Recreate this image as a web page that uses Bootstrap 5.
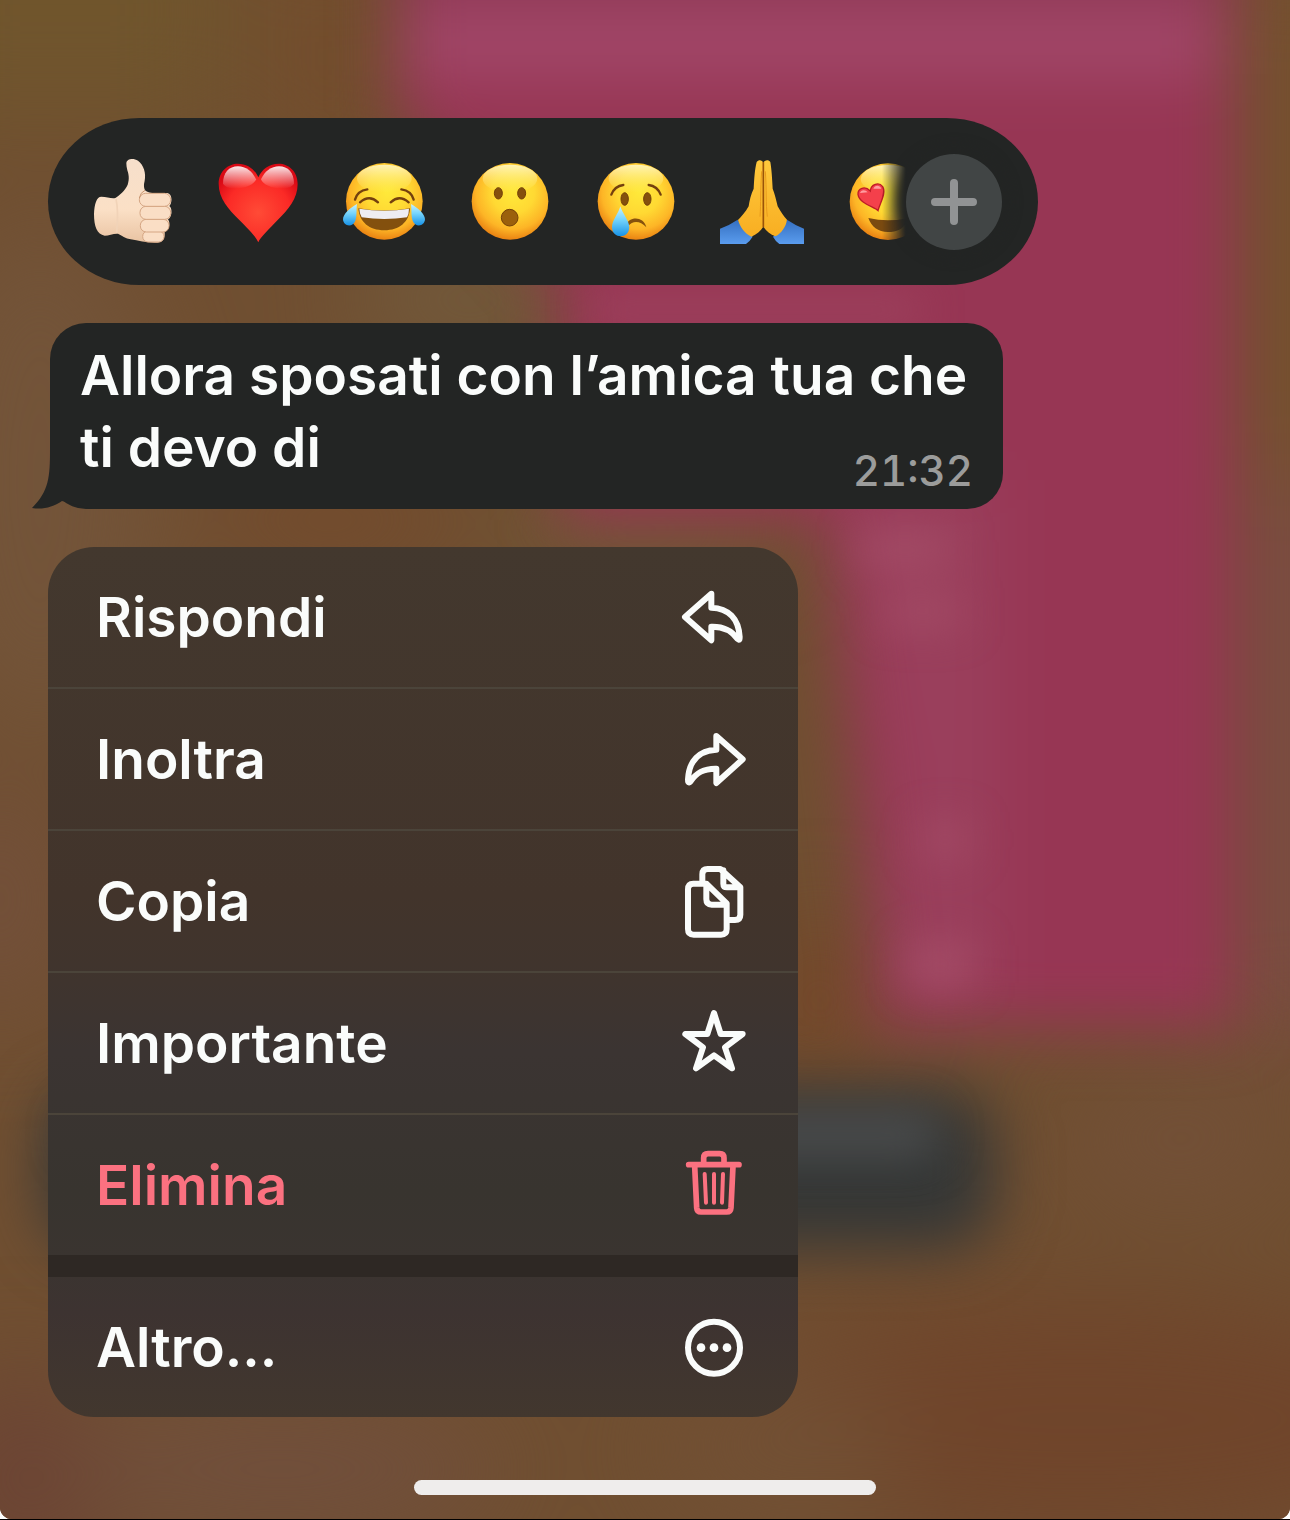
<!DOCTYPE html>
<html lang="it">
<head>
    <meta charset="UTF-8">
    <meta name="viewport" content="width=device-width, initial-scale=1.0">
    <title>Messaggio</title>
    <!-- Bootstrap CSS -->
    <link href="https://cdn.jsdelivr.net/npm/bootstrap@5.3.0/dist/css/bootstrap.min.css" rel="stylesheet">
    <!-- Custom CSS -->
    <style>
        body {
            font-family: Inter, "Liberation Sans", sans-serif;
            font-size: 55px;
            font-weight: 600;
            line-height: 72px;
            color: #fafcfb;
            background: #fff;
            border-bottom: 1px solid #000;
        }
        .screen {
            padding: 118px 48px 24px;
            border-radius: 0 0 12px 12px;
            background: #705035;
        }
        .wallpaper { z-index: 0; }
        .wallpaper filter { color-interpolation-filters: sRGB; }
        .overlay {
            z-index: 1;
            gap: 38px;
            max-width: 990px;
        }

        /* Reactions */
        .reaction-bar {
            height: 167px;
            padding-right: 36px;
            border-radius: 92px / 84px;
            background: #232524;
        }
        .reaction-list {
            gap: 42px;
            padding: 4px 0 4px 42px;
            -webkit-mask-image: linear-gradient(to right, #000 calc(100% - 24px), transparent);
            mask-image: linear-gradient(to right, #000 calc(100% - 24px), transparent);
        }
        .reaction-list svg, .menu-icon { display: block; overflow: visible; }
        .more-btn {
            width: 96px;
            height: 96px;
            background: #414545;
            box-shadow: 0 0 12px 8px #232524;
            z-index: 1;
        }

        /* Message bubble */
        .bubble {
            max-width: 953px;
            margin-left: 2px;
            padding: 16px 30px 14px;
            border-radius: 36px;
            background: #232524;
        }
        .bubble-tail {
            left: -18px;
            bottom: 0;
        }
        .bubble-time {
            margin-top: 36px;
            font-size: 42px;
            font-weight: 500;
            font-variant-numeric: tabular-nums;
            line-height: 48px;
            color: #9b9c9b;
        }

        /* Context menu */
        .context-menu {
            --bs-list-group-bg: transparent;
            --bs-list-group-color: #fafcfb;
            --bs-list-group-action-color: #fafcfb;
            --bs-list-group-border-color: #4b443a;
            max-width: 750px;
            border-radius: 46px;
            background: linear-gradient(#43382e 0, #42342b 40%, #40342d 48%, #3b3432 58%, #38342f 74%, #3a3430 82%, #3d3331 88%, #42372e 100%);
        }
        .context-menu .list-group-item {
            height: 142px;
            padding: 0 48px;
            border-width: 0 0 2px;
            font-weight: 600;
        }
        .context-menu .list-group-item.no-line {
            height: 140px;
            border-bottom-width: 0;
        }
        .context-menu .delete-item { color: #fb7180; }
        .menu-gap {
            height: 22px;
            background: #2e2824;
        }
        .menu-icon {
            fill: none;
            stroke: currentColor;
            stroke-width: 18;
            stroke-linecap: round;
            stroke-linejoin: round;
        }

        .home-bar {
            z-index: 1;
            width: 462px;
            max-width: 60%;
            height: 15px;
            background: #efedec;
        }
    </style>
</head>
<body class="min-vh-100 d-flex flex-column">
    <main class="screen position-relative overflow-hidden flex-grow-1 d-flex flex-column">
        <!-- Blurred chat behind the overlay -->
        <svg class="wallpaper position-absolute top-0 start-0 w-100 h-100" viewBox="0 0 1290 1520" preserveAspectRatio="none" aria-hidden="true">
            <defs>
                <filter id="soft" x="-50%" y="-50%" width="200%" height="200%"><feGaussianBlur stdDeviation="30"/></filter>
                <filter id="spot" x="-50%" y="-50%" width="200%" height="200%"><feGaussianBlur stdDeviation="20"/></filter>
                <filter id="wide" x="-100%" y="-100%" width="300%" height="300%"><feGaussianBlur stdDeviation="50"/></filter>
            </defs>
            <rect width="1290" height="1520" fill="#704f31"/>
            <g filter="url(#wide)">
                <rect x="-100" y="-100" width="330" height="220" fill="#70552d"/>
                <rect x="280" y="-60" width="100" height="240" fill="#744d2c"/>
                <ellipse cx="40" cy="480" rx="120" ry="260" fill="#735439"/>
                <ellipse cx="470" cy="300" rx="120" ry="60" fill="#725a3c"/>
                <ellipse cx="330" cy="520" rx="130" ry="40" fill="#744a2c"/>
                <ellipse cx="640" cy="530" rx="140" ry="40" fill="#705a38"/>
                <rect x="1225" y="-50" width="160" height="650" fill="#75512f"/>
                <rect x="1225" y="480" width="160" height="560" fill="#7b4d42"/>
                <ellipse cx="820" cy="1000" rx="60" ry="70" fill="#764628"/>
                <ellipse cx="1080" cy="1420" rx="380" ry="120" fill="#70452b"/>
                <ellipse cx="1180" cy="1140" rx="110" ry="60" fill="#735038"/>
                <ellipse cx="20" cy="1480" rx="90" ry="110" fill="#6c4434"/>
                <ellipse cx="280" cy="1470" rx="220" ry="60" fill="#714f3d"/>
                <ellipse cx="780" cy="1450" rx="120" ry="80" fill="#725034"/>
                <ellipse cx="0" cy="900" rx="70" ry="120" fill="#73503a"/>
            </g>
            <g filter="url(#soft)">
                <path d="M395-90H1235V1030H875V960L825 520H560V280L395 110Z" fill="#973654"/>
                <path d="M410 10H1215V75H410Z" fill="#a2486a"/>
                <path d="M395-90H1228V-5H395Z" fill="#8c3a55"/>
                <path d="M835 480H1000V1000H890V760Z" fill="#9a3f5c"/>
                <rect x="45" y="1090" width="950" height="160" rx="50" fill="#353736"/>
            </g>
            <g filter="url(#spot)">
                <rect x="590" y="300" width="330" height="20" fill="#a04862"/>
                <rect x="860" y="535" width="90" height="30" fill="#a54e68"/>
                <rect x="885" y="600" width="75" height="25" fill="#a54e68"/>
                <rect x="925" y="825" width="40" height="30" fill="#a54e68"/>
                <rect x="910" y="945" width="60" height="40" fill="#a54e68"/>
                <rect x="70" y="1110" width="870" height="50" rx="25" fill="#484a4b"/>
            </g>
        </svg>

        <div class="overlay position-relative d-flex flex-column w-100">
            <!-- Reactions -->
            <div class="reaction-bar d-flex align-items-center">
                <div class="reaction-list d-flex flex-grow-1 overflow-hidden">
                    <button type="button" class="btn p-0 border-0 flex-shrink-0" aria-label="Mi piace">
                        <svg width="84" height="84" viewBox="150 150 252 252">
                            <defs>
                                <linearGradient id="skin" x1="0" y1="0" x2="0" y2="1"><stop offset="0" stop-color="#f6dfcb"/><stop offset=".6" stop-color="#fbe0c6"/><stop offset="1" stop-color="#e9c3a2"/></linearGradient>
                            </defs>
                            <path d="M259 160C260 146 280 144 294 152C311 164 319 190 314 212C310 226 312 234 315 241C322 249 340 250 355 249L382 249C398 252 397 280 388 288C399 297 395 323 384 328C392 338 389 358 374 365C376 383 370 395 353 398C326 400 296 392 272 388C257 385 245 377 234 371C220 370 207 377 194 377C171 374 162 349 162 313C163 282 170 260 184 260C200 260 215 267 226 264C238 255 255 243 263 224C269 207 266 192 262 181C260 173 259 166 259 160Z" fill="url(#skin)"/>
                            <g fill="#fadec5" stroke="#d5a684" stroke-width="3">
                                <rect x="308" y="363" width="64" height="33" rx="16"/>
                                <rect x="301" y="328" width="86" height="38" rx="18"/>
                                <rect x="300" y="289" width="92" height="39" rx="18"/>
                                <rect x="298" y="250" width="94" height="39" rx="19"/>
                            </g>
                            <path d="M228 267Q236 300 230 369" fill="none" stroke="#f1d3b8" stroke-width="5"/>
                            <path d="M315 241Q301 247 298 264" fill="none" stroke="#c99772" stroke-width="3"/>
                        </svg>
                    </button>
                    <button type="button" class="btn p-0 border-0 flex-shrink-0" aria-label="Cuore">
                        <svg width="84" height="84" viewBox="528 150 252 252">
                            <defs>
                                <radialGradient id="heartRed" cx=".5" cy=".62" r=".62"><stop offset="0" stop-color="#ff4b36"/><stop offset=".65" stop-color="#fb2a26"/><stop offset="1" stop-color="#d90915"/></radialGradient>
                                <linearGradient id="gloss" x1="0" y1="0" x2="0" y2="1"><stop offset="0" stop-color="#fff" stop-opacity=".9"/><stop offset="1" stop-color="#fff" stop-opacity="0"/></linearGradient>
                            </defs>
                            <path d="M655 397C648 380 624 357 598 330C566 298 536 266 536 222C536 184 564 161 594 161C622 161 645 178 655 202C665 178 688 161 716 161C746 161 773 184 773 222C773 266 745 298 713 330C688 357 662 380 655 397Z" fill="url(#heartRed)"/>
                            <path d="M549 221C549 188 567 169 594 169C617 169 637 184 648 208C642 232 570 250 549 221Z" fill="url(#gloss)"/>
                            <path d="M762 221C762 188 744 169 717 169C694 169 674 184 663 208C669 232 741 250 762 221Z" fill="url(#gloss)"/>
                        </svg>
                    </button>
                    <button type="button" class="btn p-0 border-0 flex-shrink-0" aria-label="Risata">
                        <svg width="84" height="84" viewBox="66 60 252 252">
                            <defs>
                                <radialGradient id="face" cx=".54" cy=".38" r=".62"><stop offset="0" stop-color="#ffe93a"/><stop offset=".45" stop-color="#ffd933"/><stop offset=".78" stop-color="#fdb526"/><stop offset="1" stop-color="#ea8413"/></radialGradient>
                                <linearGradient id="shine" x1="0" y1="0" x2="0" y2="1"><stop offset="0" stop-color="#fffbd0" stop-opacity=".85"/><stop offset="1" stop-color="#fff27a" stop-opacity="0"/></linearGradient>
                                <linearGradient id="tear" x1="0" y1="0" x2="0" y2="1"><stop offset="0" stop-color="#c7f2ff"/><stop offset=".45" stop-color="#74d3fb"/><stop offset="1" stop-color="#1792e6"/></linearGradient>
                            </defs>
                            <circle cx="193" cy="184" r="115" fill="url(#face)"/>
                            <ellipse cx="193" cy="116" rx="82" ry="42" fill="url(#shine)"/>
                            <g fill="none" stroke="#74400e" stroke-width="7" stroke-linecap="round">
                                <path d="M105 179Q112 152 142 148"/>
                                <path d="M281 179Q274 152 244 148"/>
                                <path d="M120 187Q148 163 174 187"/>
                                <path d="M212 187Q238 163 266 187"/>
                            </g>
                            <path d="M115 205Q193 218 270 205C268 246 238 271 193 271C148 271 118 246 115 205Z" fill="#83500e"/>
                            <path d="M118 206Q193 218 267 206Q267 222 261 232Q193 242 125 232Q118 221 118 206Z" fill="#eeedf2"/>
                            <path d="M111 192C91 203 69 222 69 238C70 260 99 263 106 242C111 228 109 207 111 192Z" fill="url(#tear)"/>
                            <path d="M273 192C293 203 315 222 315 238C314 260 285 263 278 242C273 228 275 207 273 192Z" fill="url(#tear)"/>
                        </svg>
                    </button>
                    <button type="button" class="btn p-0 border-0 flex-shrink-0" aria-label="Sorpresa">
                        <svg width="84" height="84" viewBox="444 60 252 252">
                            <circle cx="570" cy="184" r="115" fill="url(#face)"/>
                            <ellipse cx="570" cy="116" rx="82" ry="42" fill="url(#shine)"/>
                            <g fill="#85510d" stroke="#734008" stroke-width="3">
                                <ellipse cx="535" cy="160" rx="12" ry="17"/>
                                <ellipse cx="605" cy="160" rx="12" ry="17"/>
                                <circle cx="569" cy="233" r="25" fill="#9b600c"/>
                            </g>
                        </svg>
                    </button>
                    <button type="button" class="btn p-0 border-0 flex-shrink-0" aria-label="Tristezza">
                        <svg width="84" height="84" viewBox="42 60 252 252">
                            <circle cx="168" cy="184" r="115" fill="url(#face)"/>
                            <ellipse cx="168" cy="116" rx="82" ry="42" fill="url(#shine)"/>
                            <g fill="none" stroke="#74400e" stroke-width="7" stroke-linecap="round">
                                <path d="M94 164Q104 138 130 135"/>
                                <path d="M242 164Q232 138 206 135"/>
                            </g>
                            <g fill="#85510d" stroke="#734008" stroke-width="3">
                                <ellipse cx="134" cy="177" rx="11" ry="19"/>
                                <ellipse cx="202" cy="177" rx="11" ry="19"/>
                            </g>
                            <path d="M139 257C144 230 190 226 199 262C181 242 158 241 145 258Z" fill="#85510d"/>
                            <path d="M121 199C115 222 96 240 96 262C97 298 147 298 148 262C147 240 128 222 121 199Z" fill="url(#tear)"/>
                        </svg>
                    </button>
                    <button type="button" class="btn p-0 border-0 flex-shrink-0" aria-label="Grazie">
                        <svg width="84" height="84" viewBox="420 60 252 252">
                            <defs>
                                <linearGradient id="hand" x1="0" y1="0" x2="0" y2="1"><stop offset="0" stop-color="#ffc93c"/><stop offset="1" stop-color="#f8ae22"/></linearGradient>
                                <linearGradient id="sleeve" x1="0" y1="0" x2="0" y2="1"><stop offset="0" stop-color="#346fc0"/><stop offset="1" stop-color="#5a9cee"/></linearGradient>
                            </defs>
                            <path d="M420 266Q448 256 473 239Q485 262 518 290Q508 306 498 312H420Z" fill="url(#sleeve)"/>
                            <path d="M672 266Q646 256 621 239Q611 264 579 290Q588 306 598 312H672Z" fill="url(#sleeve)"/>
                            <path d="M530 66C537 57 547 61 550 68C553 61 565 57 571 66C575 90 576 112 578 146C584 160 589 182 593 199C602 215 610 228 621 239C618 260 604 280 586 289C572 283 558 273 550 260C542 273 530 283 514 290C494 281 480 260 474 240C484 229 496 218 506 199C508 184 513 161 521 146C523 113 524 90 530 66Z" fill="url(#hand)"/>
                            <path d="M550 66V262" fill="none" stroke="#9a5308" stroke-width="5"/>
                            <path d="M545 94C541 150 543 190 540 230M556 94C560 150 557 190 562 230" fill="none" stroke="#e99b1c" stroke-width="3"/>
                        </svg>
                    </button>
                    <button type="button" class="btn p-0 border-0 flex-shrink-0" aria-label="Innamorato">
                        <svg width="84" height="84" viewBox="78 150 252 252">
                            <circle cx="204" cy="275" r="115" fill="url(#face)"/>
                            <ellipse cx="204" cy="207" rx="82" ry="42" fill="url(#shine)"/>
                            <path d="M145 324Q204 338 263 324C258 350 238 366 204 366C174 366 154 350 145 324Z" fill="#7a4a10"/>
                            <path d="M174 302C164 291 118 281 114 253C113 235 134 226 151 243C152 222 177 215 188 230C200 249 179 281 174 302Z" fill="#f4404b" stroke="#bd1c27" stroke-width="4"/>
                            <path d="M120 249C122 239 136 237 143 247ZM160 236C164 225 179 224 184 236Z" fill="#ff9da0"/>
                        </svg>
                    </button>
                </div>
                <button type="button" class="btn more-btn rounded-circle p-0 border-0 flex-shrink-0 d-flex align-items-center justify-content-center" aria-label="Altre reazioni">
                    <svg width="46" height="46" viewBox="0 0 46 46" stroke="#919394" stroke-width="8" stroke-linecap="round"><path d="M23 4V42M4 23H42"/></svg>
                </button>
            </div>

            <!-- Message -->
            <div class="bubble position-relative">
                <svg class="bubble-tail position-absolute" width="60" height="60" viewBox="0 0 60 60" fill="#232524" aria-hidden="true">
                    <path d="M18 0C18 28 17 42 0 59C11 61 21 58 30 52L60 60V0Z"/>
                </svg>
                <div class="clearfix position-relative">
                    <span>Allora sposati con l’amica tua che ti devo di</span>
                    <time class="bubble-time float-end" datetime="21:32">21:32</time>
                </div>
            </div>

            <!-- Context menu -->
            <div class="context-menu list-group overflow-hidden">
                <button type="button" class="list-group-item list-group-item-action d-flex align-items-center justify-content-between">
                    Rispondi
                    <svg class="menu-icon" width="72" height="72" viewBox="54 33 216 216"><path d="M154 71L75 141L154 211V170C192 169 215 181 233 207C239 213 239 206 239 201C236 145 205 115 154 113Z"/></svg>
                </button>
                <button type="button" class="list-group-item list-group-item-action d-flex align-items-center justify-content-between">
                    Inoltra
                    <svg class="menu-icon" width="72" height="72" viewBox="54 459 216 216"><path d="M169 498L248 568L169 639V596C131 595 109 608 91 635C84 641 84 634 84 628C87 572 118 541 169 539Z"/></svg>
                </button>
                <button type="button" class="list-group-item list-group-item-action d-flex align-items-center justify-content-between">
                    Copia
                    <svg class="menu-icon" width="72" height="72" viewBox="54 45 216 216"><path d="M100 101H139L200 160V237Q200 254 183 254H101Q84 254 84 237V118Q84 101 100 101ZM139 101V148Q139 164 155 164H200M127 100V73Q127 57 143 57H181L241 112V194Q241 210 225 210H204M190 61V101Q190 112 201 112H239"/></svg>
                </button>
                <button type="button" class="list-group-item list-group-item-action d-flex align-items-center justify-content-between">
                    Importante
                    <svg class="menu-icon" width="72" height="72" viewBox="54 471 216 216"><path d="M162 489L182 552H248L195 592L216 655L162 616L108 655L129 592L76 552H142Z"/></svg>
                </button>
                <button type="button" class="list-group-item list-group-item-action delete-item no-line d-flex align-items-center justify-content-between">
                    Elimina
                    <svg class="menu-icon" width="72" height="72" viewBox="54 57 216 216"><path stroke-width="17" d="M86 104H237M131 103V84Q131 71 144 71H179Q192 71 192 84V103M104 108L110 233Q111 246 123 246H200Q212 246 213 233L219 108"/><path stroke-width="12" d="M134 132L138 218M162 132V218M189 132L186 218"/></svg>
                </button>
                <div class="menu-gap"></div>
                <button type="button" class="list-group-item list-group-item-action no-line d-flex align-items-center justify-content-between">
                    Altro...
                    <svg class="menu-icon" width="72" height="72" viewBox="54 542 216 216"><circle cx="162" cy="652" r="78"/><g fill="currentColor" stroke="none"><circle cx="123" cy="652" r="13"/><circle cx="162" cy="652" r="13"/><circle cx="201" cy="652" r="13"/></g></svg>
                </button>
            </div>
        </div>

        <div class="home-bar position-relative rounded-pill mx-auto mt-auto"></div>
    </main>

    <!-- Bootstrap JS -->
    <script src="https://cdn.jsdelivr.net/npm/bootstrap@5.3.0/dist/js/bootstrap.bundle.min.js"></script>
</body>
</html>
